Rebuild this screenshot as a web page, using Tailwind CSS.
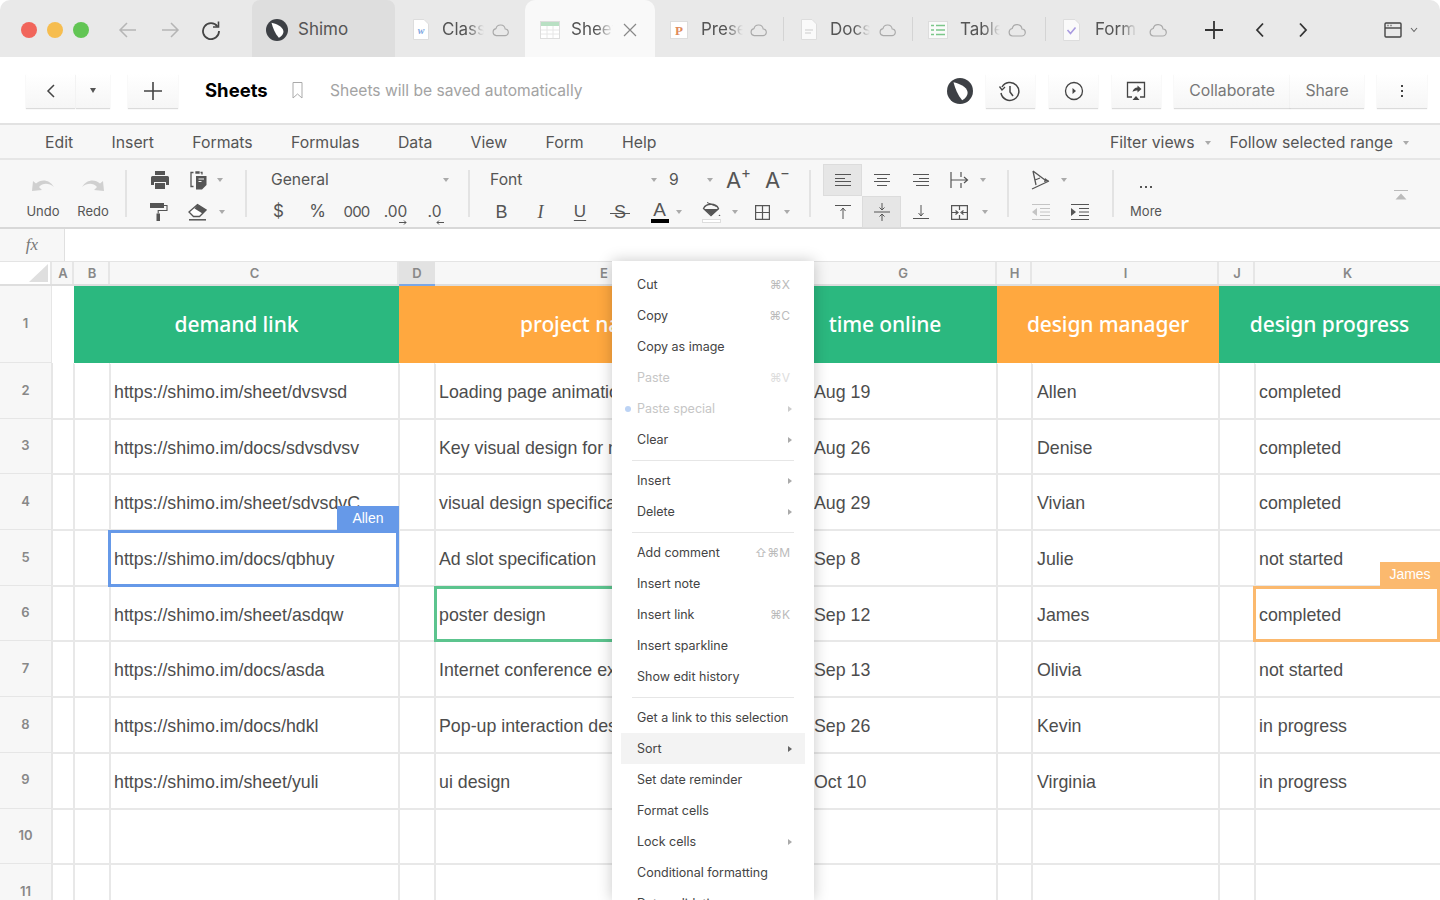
<!DOCTYPE html>
<html lang="en">
<head>
    <meta charset="UTF-8">
    <title>Shimo Sheets</title>
    <script src="https://cdn.jsdelivr.net/npm/@tailwindcss/browser@4"></script>
</head>
<body class="bg-white font-['Inter',sans-serif] text-[#555] overflow-hidden">
<div class="relative w-[1440px] h-[900px] overflow-hidden flex flex-col">

    <!-- Browser tabs -->
    <div class="h-[57px] shrink-0 bg-[#e9e9e9] rounded-t-[10px] flex items-center pt-[2px] pl-[21px] text-[17px] text-[#555] whitespace-nowrap">
        <div class="flex gap-[10px]">
            <div class="w-4 h-4 rounded-full bg-[#f1655b]"></div>
            <div class="w-4 h-4 rounded-full bg-[#f6bd4f]"></div>
            <div class="w-4 h-4 rounded-full bg-[#62c554]"></div>
        </div>
        <svg class="ml-[29px] w-5 h-5 text-[#b5b5b5]" viewBox="0 0 20 20" fill="none" stroke="currentColor" stroke-width="1.5"><path d="M18 10H2M9 3l-7 7 7 7"/></svg>
        <svg class="ml-[22px] w-5 h-5 text-[#b5b5b5]" viewBox="0 0 20 20" fill="none" stroke="currentColor" stroke-width="1.5"><path d="M2 10h16M11 3l7 7-7 7"/></svg>
        <svg class="ml-[21px] w-5 h-5 text-[#444]" viewBox="0 0 20 20" fill="none" stroke="currentColor" stroke-width="1.8"><path d="M16.5 6.5A8 8 0 1 0 18 11"/><path d="M17.5 1.5v5.5h-5.5" stroke-width="1.6"/></svg>

        <!-- Shimo -->
        <div class="ml-[31px] w-[143px] self-start -mt-[2px] h-[57px] pt-[2px] bg-[#dedede] rounded-t-[8px] flex items-center pl-[14px]">
            <svg class="w-[22px] h-[22px]" viewBox="0 0 24 24"><circle cx="12" cy="12" r="12" fill="#3d4045"/><path d="M6 4C11 5 18 8 19 13c.3 3-2 6-5 7.500C10 16 7.500 10 6 4z" fill="#fff"/></svg>
            <span class="ml-[10px]">Shimo</span>
        </div>

        <!-- Class -->
        <div class="w-[130px] self-start -mt-[2px] h-[57px] pt-[2px] flex items-center pl-[18px]">
            <svg class="w-4 h-[21px]" viewBox="0 0 16 21"><path d="M.5.5h10.500l4.500 4.500v15.500H.5z" fill="#fff" stroke="#ddd"/><text x="8" y="15" font-size="10" font-style="italic" font-weight="700" font-family="Liberation Serif" fill="#7ea6e0" text-anchor="middle">w</text></svg>
            <span class="ml-[13px] w-[42px] overflow-hidden [mask-image:linear-gradient(to_right,#000_60%,transparent)]">Class</span>
            <svg class="ml-[8px] w-[17px] h-[14px] text-[#aaa]" viewBox="0 0 18 14" fill="none" stroke="currentColor" stroke-width="1.200"><path d="M4.500 13h9a3.500 3.500 0 0 0 .5-7 5 5 0 0 0-9.800-.5A3.800 3.800 0 0 0 4.500 13z"/></svg>
        </div>

        <!-- Active sheet -->
        <div class="w-[130px] self-start -mt-[2px] h-[57px] pt-[2px] bg-[#f9f9f9] rounded-t-[10px] flex items-center pl-[15px]">
            <svg class="w-5 h-[18px]" viewBox="0 0 20 18"><rect x=".5" y=".5" width="19" height="17" fill="#fff" stroke="#ddd"/><rect x="1" y="1" width="18" height="4" fill="#b9e0c4"/><path d="M1 9h18M1 13h18M7 5v12M13 5v12" stroke="#e6e6e6"/></svg>
            <span class="ml-[11px] w-[42px] overflow-hidden [mask-image:linear-gradient(to_right,#000_60%,transparent)]">Sheet</span>
            <svg class="ml-[10px] w-[14px] h-[14px] text-[#888]" viewBox="0 0 14 14" fill="none" stroke="currentColor" stroke-width="1.200"><path d="M1 1l12 12M13 1L1 13"/></svg>
        </div>

        <!-- Presentation -->
        <div class="w-[129px] self-start -mt-[2px] h-[57px] pt-[2px] flex items-center pl-[15px] relative">
            <svg class="w-[18px] h-[18px]" viewBox="0 0 18 18"><rect x=".5" y=".5" width="17" height="17" fill="#fff" stroke="#ddd"/><text x="9" y="14" font-size="13" font-weight="700" font-family="Liberation Serif" fill="#e08a5a" text-anchor="middle">P</text></svg>
            <span class="ml-[13px] w-[42px] overflow-hidden [mask-image:linear-gradient(to_right,#000_60%,transparent)]">Prese</span>
            <svg class="ml-[7px] w-[17px] h-[14px] text-[#aaa]" viewBox="0 0 18 14" fill="none" stroke="currentColor" stroke-width="1.200"><path d="M4.500 13h9a3.500 3.500 0 0 0 .5-7 5 5 0 0 0-9.800-.5A3.800 3.800 0 0 0 4.500 13z"/></svg>
            <div class="absolute right-0 top-[17px] h-[24px] w-px bg-[#d4d4d4]"></div>
        </div>

        <!-- Docs -->
        <div class="w-[129px] self-start -mt-[2px] h-[57px] pt-[2px] flex items-center pl-[17px] relative">
            <svg class="w-4 h-[21px]" viewBox="0 0 16 21"><path d="M.5.5h10.500l4.500 4.500v15.500H.5z" fill="#fafafa" stroke="#ddd"/><path d="M4 11h8M4 14h6" stroke="#ccc"/></svg>
            <span class="ml-[13px] w-[40px] overflow-hidden [mask-image:linear-gradient(to_right,#000_60%,transparent)]">Docs</span>
            <svg class="ml-[9px] w-[17px] h-[14px] text-[#aaa]" viewBox="0 0 18 14" fill="none" stroke="currentColor" stroke-width="1.200"><path d="M4.500 13h9a3.500 3.500 0 0 0 .5-7 5 5 0 0 0-9.800-.5A3.800 3.800 0 0 0 4.500 13z"/></svg>
            <div class="absolute right-0 top-[17px] h-[24px] w-px bg-[#d4d4d4]"></div>
        </div>

        <!-- Table -->
        <div class="w-[133px] self-start -mt-[2px] h-[57px] pt-[2px] flex items-center pl-[15px] relative">
            <svg class="w-5 h-[18px]" viewBox="0 0 20 18"><rect x=".5" y=".5" width="19" height="17" fill="#fafafa" stroke="#ddd"/><path d="M3 4.500h3M8 4.500h9M3 9h3M8 9h9M3 13.500h3M8 13.500h9" stroke="#7cc78a" stroke-width="1.500"/></svg>
            <span class="ml-[12px] w-[40px] overflow-hidden [mask-image:linear-gradient(to_right,#000_60%,transparent)]">Table</span>
            <svg class="ml-[8px] w-[18px] h-[14px] text-[#aaa]" viewBox="0 0 18 14" fill="none" stroke="currentColor" stroke-width="1.200"><path d="M4.500 13h9a3.500 3.500 0 0 0 .5-7 5 5 0 0 0-9.800-.5A3.800 3.800 0 0 0 4.500 13z"/></svg>
            <div class="absolute right-0 top-[17px] h-[24px] w-px bg-[#d4d4d4]"></div>
        </div>

        <!-- Form -->
        <div class="self-start -mt-[2px] h-[57px] pt-[2px] flex items-center pl-[17px]">
            <svg class="w-[17px] h-[22px]" viewBox="0 0 17 22"><path d="M.5.500h11.500l4.500 4.500v16.500H.5z" fill="#fafafa" stroke="#ddd"/><path d="M4.500 11l3 3.500 5-6" fill="none" stroke="#a99be0" stroke-width="1.600"/></svg>
            <span class="ml-[15px] w-[42px] overflow-hidden [mask-image:linear-gradient(to_right,#000_60%,transparent)]">Form</span>
            <svg class="ml-[12px] w-[18px] h-[14px] text-[#aaa]" viewBox="0 0 18 14" fill="none" stroke="currentColor" stroke-width="1.200"><path d="M4.500 13h9a3.500 3.500 0 0 0 .5-7 5 5 0 0 0-9.800-.5A3.800 3.800 0 0 0 4.500 13z"/></svg>
        </div>

        <svg class="ml-[37px] w-5 h-5 text-[#333]" viewBox="0 0 20 20" fill="none" stroke="currentColor" stroke-width="1.800"><path d="M10 1v18M1 10h18"/></svg>
        <svg class="ml-[30px] w-3 h-4 text-[#333]" viewBox="0 0 12 16" fill="none" stroke="currentColor" stroke-width="1.800"><path d="M9 1.500L3 8l6 6.500"/></svg>
        <svg class="ml-[31px] w-3 h-4 text-[#333]" viewBox="0 0 12 16" fill="none" stroke="currentColor" stroke-width="1.800"><path d="M3 1.500L9 8l-6 6.500"/></svg>
        <svg class="ml-[75px] w-[18px] h-[16px] text-[#444]" viewBox="0 0 18 16" fill="none" stroke="currentColor" stroke-width="1.400"><rect x="1" y="1" width="16" height="14" rx="1"/><path d="M1 6h16" /><path d="M3.500 3.500h1M6.500 3.500h1"/></svg>
        <svg class="ml-[8px] w-2 h-[6px] text-[#666]" viewBox="0 0 8 6" fill="none" stroke="currentColor" stroke-width="1.100"><path d="M1 1l3 3.500L7 1"/></svg>
    </div>

    <!-- Document header -->
    <div class="h-[68px] shrink-0 bg-white flex items-center pt-px pl-[26px] border-b-2 border-[#e2e2e2]">
        <div class="w-[49px] h-[34px] bg-linear-to-b from-white to-[#f6f6f6] shadow-[0_1px_1px_rgba(0,0,0,0.14)] flex items-center justify-center">
            <svg class="w-[10px] h-[16px] text-[#444]" viewBox="0 0 10 16" fill="none" stroke="currentColor" stroke-width="1.500"><path d="M8 2L2 8l6 6"/></svg>
        </div>
        <div class="ml-px w-[34px] h-[34px] bg-linear-to-b from-white to-[#f6f6f6] shadow-[0_1px_1px_rgba(0,0,0,0.14)] flex items-center justify-center">
            <div class="border-x-[3.5px] border-t-[5px] border-x-transparent border-t-[#555]"></div>
        </div>
        <div class="ml-[18px] w-[50px] h-[34px] bg-linear-to-b from-white to-[#f6f6f6] shadow-[0_1px_1px_rgba(0,0,0,0.14)] flex items-center justify-center">
            <svg class="w-5 h-5 text-[#444]" viewBox="0 0 20 20" fill="none" stroke="currentColor" stroke-width="1.600"><path d="M10 1v18M1 10h18"/></svg>
        </div>
        <span class="ml-[27px] w-[63px] text-[18.5px] font-bold text-black">Sheets</span>
        <svg class="ml-[24px] w-[11px] h-[17px] text-[#aaa]" viewBox="0 0 11 17" fill="none" stroke="currentColor"><path d="M1 .500h9V16l-4.500-4L1 16z"/></svg>
        <span class="ml-[27px] text-[15.6px] text-[#a3a3a3]">Sheets will be saved automatically</span>

        <svg class="ml-auto w-[26px] h-[26px]" viewBox="0 0 24 24"><circle cx="12" cy="12" r="12" fill="#3d4045"/><path d="M6 4C11 5 18 8 19 13c.3 3-2 6-5 7.500C10 16 7.500 10 6 4z" fill="#fff"/></svg>
        <div class="ml-[13px] w-[49px] h-[34px] bg-linear-to-b from-white to-[#f6f6f6] shadow-[0_1px_1px_rgba(0,0,0,0.14)] flex items-center justify-center">
            <svg class="mr-[3px] w-[22px] h-[22px] text-[#444]" viewBox="0 0 22 22" fill="none" stroke="currentColor" stroke-width="1.500"><path d="M4 7a9 9 0 1 1-1 6"/><path d="M1.500 6.500L4 10l3-3" stroke-width="1.300"/><path d="M12 6v6l3 4"/></svg>
        </div>
        <div class="ml-[14px] w-[49px] h-[34px] bg-linear-to-b from-white to-[#f6f6f6] shadow-[0_1px_1px_rgba(0,0,0,0.14)] flex items-center justify-center">
            <svg class="w-[20px] h-[20px] text-[#444]" viewBox="0 0 20 20" fill="none" stroke="currentColor" stroke-width="1.300"><circle cx="10" cy="10" r="8.500"/><path d="M8.500 7l3.500 3-3.500 3z" fill="currentColor" stroke="none"/></svg>
        </div>
        <div class="ml-[14px] w-[49px] h-[34px] bg-linear-to-b from-white to-[#f6f6f6] shadow-[0_1px_1px_rgba(0,0,0,0.14)] flex items-center justify-center">
            <svg class="mr-[2px] w-[20px] h-[20px] text-[#444]" viewBox="0 0 20 20" fill="none" stroke="currentColor" stroke-width="1.300"><path d="M6 16H1.500V1.500h17V16H14"/><path d="M10 15l-3.500 4h7z" fill="currentColor" stroke="none"/><path d="M6.500 11c.5-3 2.500-4.500 5-4.500V4.500l4 3.500-4 3.500V9.500c-2 0-3.500.5-5 1.500z" fill="currentColor" stroke="none"/></svg>
        </div>
        <div class="ml-[13px] w-[116px] h-[34px] bg-linear-to-b from-white to-[#f6f6f6] shadow-[0_1px_1px_rgba(0,0,0,0.14)] flex items-center justify-center text-[15.8px] text-[#777]">Collaborate</div>
        <div class="w-[74px] h-[34px] bg-linear-to-b from-white to-[#f6f6f6] shadow-[0_1px_1px_rgba(0,0,0,0.14)] flex items-center justify-center text-[15.8px] text-[#777]">Share</div>
        <div class="ml-[13px] mr-[13px] w-[50px] h-[34px] bg-linear-to-b from-white to-[#f6f6f6] shadow-[0_1px_1px_rgba(0,0,0,0.14)] flex flex-col items-center justify-center gap-[3px]">
            <div class="w-[2px] h-[2px] bg-[#444]"></div><div class="w-[2px] h-[2px] bg-[#444]"></div><div class="w-[2px] h-[2px] bg-[#444]"></div>
        </div>
    </div>

    <!-- Menu bar -->
    <div class="h-[35px] shrink-0 bg-[#f7f7f7] border-b-2 border-[#e6e6e6] flex items-center pt-[3px] pl-[45px] gap-[38.3px] text-[15.8px] text-[#555]">
        <span>Edit</span><span>Insert</span><span>Formats</span><span>Formulas</span><span>Data</span><span>View</span><span>Form</span><span>Help</span>
        <div class="ml-auto mr-[31px] flex items-center">
            <span>Filter views</span>
            <div class="ml-[10px] border-x-[3.5px] border-t-[4px] border-x-transparent border-t-[#aaa]"></div>
            <span class="ml-[19px]">Follow selected range</span>
            <div class="ml-[10px] border-x-[3.5px] border-t-[4px] border-x-transparent border-t-[#aaa]"></div>
        </div>
    </div>

    <!-- Toolbar -->
    <div class="h-[69px] shrink-0 bg-[#f7f7f7] border-b-2 border-[#d8d8d8] flex items-start pt-[4px] text-[#555] relative">
        <div class="ml-[18px] flex">
            <div class="w-[50px] h-[64px] flex flex-col items-center justify-end text-[13px]">
                <svg class="w-[24px] h-[14px] mb-[10px] text-[#d0d0d0]" viewBox="0 0 24 14" fill="currentColor"><path d="M1 13L2 3l3 2.500C10 1 18 1 23 9c-5-4-11-4.500-15 0l3 3z"/></svg>
                <span class="mb-[7px]">Undo</span>
            </div>
            <div class="w-[50px] h-[64px] flex flex-col items-center justify-end text-[13px]">
                <svg class="w-[24px] h-[14px] mb-[10px] text-[#d0d0d0]" viewBox="0 0 24 14" fill="currentColor"><path d="M23 13L22 3l-3 2.500C14 1 6 1 1 9c5-4 11-4.500 15 0l-3 3z"/></svg>
                <span class="mb-[7px]">Redo</span>
            </div>
        </div>
        <div class="ml-[7px] mt-[6px] w-[2px] h-[47px] bg-[#e3e3e3]"></div>

        <!-- print / paste / roller / eraser -->
        <div class="ml-[13px] flex flex-col w-[85px]">
            <div class="h-[32px] flex items-center">
                <div class="w-[39px] flex justify-center"><svg class="w-[18px] h-[18px] text-[#555]" viewBox="0 0 18 18" fill="currentColor"><path d="M4 0h10v4H4zM1.500 5h15A1.500 1.500 0 0 1 18 6.500V14h-3v-3H3v3H0V6.500A1.500 1.500 0 0 1 1.500 5zM4 12h10v6H4z"/></svg></div>
                <div class="w-[39px] flex justify-center"><svg class="w-[17px] h-[19px] text-[#555]" viewBox="0 0 17 19"><path d="M3.500 1.500H1v14h2.500M6 .8h3v1.400H6zM10.500 1.500H12v2" fill="none" stroke="currentColor" stroke-width="1.300"/><path d="M6 5h10.500v9L12 18.500H6z" fill="currentColor"/><path d="M8.500 8h5.500M8.500 10.500h3" stroke="#f7f7f7"/></svg></div>
                <div class="ml-[-1px] border-x-[3.5px] border-t-[4px] border-x-transparent border-t-[#aaa]"></div>
            </div>
            <div class="h-[32px] flex items-center">
                <div class="w-[39px] flex justify-center"><svg class="w-[18px] h-[18px] text-[#555]" viewBox="0 0 18 18"><path d="M0 0h14v5H0zM6.500 10.500h3.500V18H6.500z" fill="currentColor"/><path d="M14 2.500h3V7.500H8.200v3" fill="none" stroke="currentColor" stroke-width="1.100"/></svg></div>
                <div class="w-[39px] flex justify-center"><svg class="w-[19px] h-[18px] text-[#555]" viewBox="0 0 19 18"><path d="M1 9L9.500 1.500 18 7l-6.500 6.500H5.500z" fill="#fff" stroke="currentColor" stroke-width="1.300"/><path d="M6.500 5.500L9.500 1.500 18 7l-3.500 3.500z" fill="currentColor"/><path d="M1 16.800h17" stroke="currentColor" stroke-width="1.500"/></svg></div>
                <div class="ml-[2px] border-x-[3.5px] border-t-[4px] border-x-transparent border-t-[#aaa]"></div>
            </div>
        </div>
        <div class="ml-[20px] mt-[6px] w-[2px] h-[47px] bg-[#e3e3e3]"></div>

        <!-- number format -->
        <div class="ml-[12px] flex flex-col w-[197px]">
            <div class="h-[32px] flex items-center pl-[12px] text-[15.7px]">
                <span>General</span>
                <div class="ml-[114px] border-x-[3.5px] border-t-[4px] border-x-transparent border-t-[#aaa]"></div>
            </div>
            <div class="h-[32px] flex items-center text-[17px]">
                <div class="w-[39px] text-center">$</div>
                <div class="w-[39px] text-center">%</div>
                <div class="w-[39px] text-center text-[15px] tracking-[-0.8px]">000</div>
                <div class="w-[39px] flex flex-col items-center leading-[16px] text-[15.5px] relative">.00<svg class="absolute top-[16px] right-[8px] w-2 h-[5px]" viewBox="0 0 8 5" fill="none" stroke="currentColor"><path d="M0 2.500h7M5 .500l2 2-2 2"/></svg></div>
                <div class="w-[39px] flex flex-col items-center leading-[16px] text-[15.5px] relative">.0<svg class="absolute top-[16px] right-[10px] w-2 h-[5px]" viewBox="0 0 8 5" fill="none" stroke="currentColor"><path d="M8 2.500H1M3 .500l-2 2 2 2"/></svg></div>
            </div>
        </div>
        <div class="ml-[12px] mt-[6px] w-[2px] h-[47px] bg-[#e3e3e3]"></div>

        <!-- font -->
        <div class="ml-[12px] flex flex-col w-[328px]">
            <div class="h-[32px] flex items-center pl-[8px] text-[15.7px]">
                <span class="w-[161px]">Font</span>
                <div class="border-x-[3.5px] border-t-[4px] border-x-transparent border-t-[#aaa]"></div>
                <span class="ml-[12px] w-[38px]">9</span>
                <div class="border-x-[3.5px] border-t-[4px] border-x-transparent border-t-[#aaa]"></div>
                <span class="ml-[13px] text-[22px] leading-none relative w-[39px]">A<span class="absolute left-[15px] top-[-4px] text-[15px]">+</span></span>
                <span class="text-[22px] leading-none relative">A<span class="absolute left-[15px] top-[-4px] text-[15px]">−</span></span>
            </div>
            <div class="h-[32px] flex items-center text-[18px]">
                <div class="w-[39px] text-center font-['Liberation_Sans']">B</div>
                <div class="w-[39px] text-center italic font-['Liberation_Serif']">I</div>
                <div class="w-[40px] text-center underline underline-offset-[3px] font-['Liberation_Sans'] text-[17px]">U</div>
                <div class="w-[40px] flex justify-center relative font-['Liberation_Sans'] text-[18px]">S<div class="absolute left-[10px] right-[10px] top-[14px] h-px bg-[#555]"></div></div>
                <div class="w-[39px] flex flex-col items-center leading-[18px]"><span class="text-[19px] font-['Liberation_Sans']">A</span><div class="w-[18px] h-[4px] bg-black"></div></div>
                <div class="ml-[-3px] border-x-[3.5px] border-t-[4px] border-x-transparent border-t-[#aaa]"></div>
                <div class="ml-[17px] w-[24px] flex justify-center"><svg class="w-[19px] h-[22px] text-[#555]" viewBox="0 0 19 22"><path d="M1.500 7.500L9 14.500 16.500 7.500A8 6.500 0 0 0 1.500 7.500z" fill="none" stroke="currentColor" stroke-width="1.300"/><path d="M2 8h15l-7.500 6.500z" fill="currentColor"/><path d="M5 1.500L14.500 5.500" stroke="currentColor"/><path d="M17.500 13.500l1 1.500h-2z" fill="currentColor"/><rect x=".5" y="18.500" width="18" height="3" fill="#fff" stroke="#ddd"/></svg></div>
                <div class="ml-[9px] border-x-[3.5px] border-t-[4px] border-x-transparent border-t-[#aaa]"></div>
                <div class="ml-[14px] w-[20px] flex justify-center"><svg class="w-[15px] h-[15px] text-[#555]" viewBox="0 0 15 15" fill="none" stroke="currentColor" stroke-width="1.200"><path d="M.6.600h13.800v13.800H.6zM7.500 1v13M1 7.500h13"/></svg></div>
                <div class="ml-[12px] border-x-[3.5px] border-t-[4px] border-x-transparent border-t-[#aaa]"></div>
            </div>
        </div>
        <div class="ml-[-1px] mt-[6px] w-[2px] h-[47px] bg-[#e3e3e3]"></div>

        <!-- alignment -->
        <div class="ml-[12px] flex flex-col w-[172px]">
            <div class="h-[32px] flex items-center">
                <div class="w-[39px] h-[32px] bg-[#e6e6e6] border border-[#dcdcdc] flex items-center justify-center"><svg class="w-4 h-3 text-[#555]" viewBox="0 0 16 12" stroke="currentColor"><path d="M0 .500h16M0 4.500h10M0 7.500h16M0 11.500h16"/></svg></div>
                <div class="w-[39px] flex justify-center"><svg class="w-4 h-3 text-[#555]" viewBox="0 0 16 12" stroke="currentColor"><path d="M0 .500h16M3 4.500h10M0 7.500h16M3 11.500h10"/></svg></div>
                <div class="w-[39px] flex justify-center"><svg class="w-4 h-3 text-[#555]" viewBox="0 0 16 12" stroke="currentColor"><path d="M0 .500h16M6 4.500h10M0 7.500h16M3 11.500h13"/></svg></div>
                <div class="w-[39px] flex justify-center"><svg class="w-[19px] h-[16px] text-[#555]" viewBox="0 0 19 16" fill="none" stroke="currentColor" stroke-width="1.200"><path d="M1 0v16M11 0v5M11 11v5M1 8h16M14 5l3.500 3L14 11"/></svg></div>
                <div class="ml-[1px] border-x-[3.5px] border-t-[4px] border-x-transparent border-t-[#aaa]"></div>
            </div>
            <div class="h-[32px] flex items-center">
                <div class="w-[39px] flex justify-center"><svg class="w-4 h-[14px] text-[#555]" viewBox="0 0 16 14" fill="none" stroke="currentColor"><path d="M0 .500h16M8 14V3M5.500 6L8 3l2.500 3"/></svg></div>
                <div class="w-[39px] h-[32px] bg-[#e6e6e6] border border-[#dcdcdc] flex items-center justify-center"><svg class="w-4 h-[18px] text-[#555]" viewBox="0 0 16 18" fill="none" stroke="currentColor"><path d="M0 9h16M8 0v7M8 11v7M5.500 4.500L8 7l2.500-2.500M5.500 13.500L8 11l2.500 2.500"/></svg></div>
                <div class="w-[39px] flex justify-center"><svg class="w-4 h-[14px] text-[#555]" viewBox="0 0 16 14" fill="none" stroke="currentColor"><path d="M0 13.500h16M8 0v11M5.500 8L8 11l2.500-3"/></svg></div>
                <div class="w-[39px] flex justify-center"><svg class="w-[17px] h-[15px] text-[#555]" viewBox="0 0 17 15" fill="none" stroke="currentColor" stroke-width="1.200"><path d="M.6.600h15.800v13.800H.6zM8.500 1v4M8.500 10v4M1 7.500h5M4.500 5.500L7 7.500l-2.500 2M16 7.500h-5M12.500 5.500L10 7.500l2.500 2"/></svg></div>
                <div class="ml-[3px] border-x-[3.5px] border-t-[4px] border-x-transparent border-t-[#aaa]"></div>
            </div>
        </div>
        <div class="ml-[12px] mt-[6px] w-[2px] h-[47px] bg-[#e3e3e3]"></div>

        <!-- rotate / indent -->
        <div class="ml-[12px] flex flex-col w-[78px]">
            <div class="h-[32px] flex items-center">
                <div class="w-[39px] flex justify-center"><svg class="w-[19px] h-[20px] text-[#555]" viewBox="0 0 19 20" fill="none" stroke="currentColor" stroke-width="1.300"><path d="M1 19L18 11 M2 1l3 14M2 1l12 9M4 10l5-2"/><path d="M14 8l4 3-5 1z" fill="currentColor" stroke="none"/></svg></div>
                <div class="ml-[1px] border-x-[3.5px] border-t-[4px] border-x-transparent border-t-[#aaa]"></div>
            </div>
            <div class="h-[32px] flex items-center">
                <div class="w-[39px] flex justify-center"><svg class="w-[18px] h-[16px] text-[#c4c4c4]" viewBox="0 0 18 16" stroke="currentColor"><path d="M0 .500h18M8 4.500h10M8 8h10M8 11.500h10M0 15.500h18"/><path d="M5 4v8L0 8z" fill="currentColor" stroke="none"/></svg></div>
                <div class="w-[39px] flex justify-center"><svg class="w-[18px] h-[16px] text-[#555]" viewBox="0 0 18 16" stroke="currentColor"><path d="M0 .500h18M8 4.500h10M8 8h10M8 11.500h10M0 15.500h18"/><path d="M0 4v8l5-4z" fill="currentColor" stroke="none"/></svg></div>
            </div>
        </div>
        <div class="ml-[13px] mt-[6px] w-[2px] h-[47px] bg-[#e3e3e3]"></div>

        <div class="ml-[7px] w-[50px] h-[64px] flex flex-col items-center justify-end text-[13px]">
            <div class="flex gap-[3px] mb-[14px]"><div class="w-[2px] h-[2px] bg-[#555]"></div><div class="w-[2px] h-[2px] bg-[#555]"></div><div class="w-[2px] h-[2px] bg-[#555]"></div></div>
            <span class="mb-[7px]">More</span>
        </div>
        <svg class="absolute left-[1394px] top-[30px] w-[14px] h-[10px] text-[#bbb]" viewBox="0 0 14 10" fill="currentColor"><path d="M0 0h14v1H0zM7 3.500L12.500 9.500h-11z"/></svg>
    </div>

    <!-- Formula bar -->
    <div class="h-[33px] shrink-0 flex bg-white border-b border-[#e4e4e4]">
        <div class="w-[65px] bg-[#f7f7f7] border-r border-[#e0e0e0] flex items-center justify-center font-['Liberation_Serif'] italic text-[17px] text-[#777]">fx</div>
    </div>

    <!-- Sheet -->
    <div id="sheet" class="flex-1 overflow-hidden">
        <div class="h-[24px] grid grid-cols-[52px_22px_36px_289px_36px_338px_36px_188px_35px_187px_36px_185px] text-[13px] font-semibold text-[#888] border-b-2 border-[#dedede]">
            <div class="bg-white border-r-2 border-[#e6e6e6] flex justify-end items-end pr-[2px] pb-[2px]">
                <div class="w-0 h-0 border-l-[19px] border-b-[18px] border-l-transparent border-b-[#dfdfdf]"></div>
            </div>
            <div class="bg-[#f7f7f7] border-r-2 border-[#e6e6e6] pl-[2px] pt-px flex items-center justify-center">A</div>
            <div class="bg-[#f7f7f7] border-r-2 border-[#e6e6e6] pl-[2px] pt-px flex items-center justify-center">B</div>
            <div class="bg-[#f7f7f7] border-r-2 border-[#e6e6e6] pl-[2px] pt-px flex items-center justify-center">C</div>
            <div class="bg-[#e2e2e2] border-b-2 -mb-[2px] border-[#7ba7e6] pt-px flex items-center justify-center">D</div>
            <div class="bg-[#f7f7f7] border-r-2 border-[#e6e6e6] pl-[2px] pt-px flex items-center justify-center">E</div>
            <div class="bg-[#f7f7f7] border-r-2 border-[#e6e6e6] pl-[2px] pt-px flex items-center justify-center">F</div>
            <div class="bg-[#f7f7f7] border-r-2 border-[#e6e6e6] pl-[2px] pt-px flex items-center justify-center">G</div>
            <div class="bg-[#f7f7f7] border-r-2 border-[#e6e6e6] pl-[2px] pt-px flex items-center justify-center">H</div>
            <div class="bg-[#f7f7f7] border-r-2 border-[#e6e6e6] pl-[2px] pt-px flex items-center justify-center">I</div>
            <div class="bg-[#f7f7f7] border-r-2 border-[#e6e6e6] pl-[2px] pt-px flex items-center justify-center">J</div>
            <div class="bg-[#f7f7f7] pt-px flex items-center justify-center">K</div>
        </div>
        <div class="h-[77px] grid grid-cols-[52px_22px_325px_374px_224px_222px_221px] font-['Noto_Sans',sans-serif] text-[21px] tracking-[-0.1px] font-medium text-white">
            <div class="bg-[#f7f7f7] border-r border-b border-[#e6e6e6] shadow-[1px_1px_0_#e6e6e6] flex items-center justify-center font-['Inter'] text-[13px] font-semibold text-[#888]">1</div>
            <div class="bg-white"></div>
            <div class="bg-[#2bb87f] flex items-center justify-center">demand link</div>
            <div class="bg-[#ffa83f] flex items-center justify-center">project name</div>
            <div class="bg-[#2bb87f] flex items-center justify-center">time online</div>
            <div class="bg-[#ffa83f] flex items-center justify-center">design manager</div>
            <div class="bg-[#2bb87f] flex items-center justify-center">design progress</div>
        </div>
    </div>

    <!-- Context menu -->
    <div class="absolute z-20 left-[612px] top-[261px] bottom-0 w-[202px] bg-white shadow-[0_0_14px_rgba(0,0,0,0.22)] pt-[8px] text-[12.5px] leading-[20px] text-[#444] whitespace-nowrap overflow-hidden">
        <div class="h-[31px] flex items-center pl-[25px] pr-[24px] justify-between"><span>Cut</span><span class="text-[#bbb] text-[12px]">⌘X</span></div>
        <div class="h-[31px] flex items-center pl-[25px] pr-[24px] justify-between"><span>Copy</span><span class="text-[#bbb] text-[12px]">⌘C</span></div>
        <div class="h-[31px] flex items-center pl-[25px] pr-[24px] justify-between"><span>Copy as image</span></div>
        <div class="h-[31px] flex items-center pl-[25px] pr-[24px] justify-between text-[#c6c6c6]"><span>Paste</span><span class="text-[#ddd] text-[12px]">⌘V</span></div>
        <div class="relative h-[31px] flex items-center pl-[25px] pr-[22px] justify-between text-[#c6c6c6]">
            <div class="absolute left-[13px] top-[13px] w-[6px] h-[6px] rounded-full bg-[#bcd3f5]"></div>
            <span>Paste special</span><div class="border-y-[3.5px] border-l-[4px] border-y-transparent border-l-[#ccc]"></div>
        </div>
        <div class="h-[31px] flex items-center pl-[25px] pr-[22px] justify-between"><span>Clear</span><div class="border-y-[3.5px] border-l-[4px] border-y-transparent border-l-[#aaa]"></div></div>
        <div class="mx-[20px] my-[4.5px] h-px bg-[#e6e6e6]"></div>
        <div class="h-[31px] flex items-center pl-[25px] pr-[22px] justify-between"><span>Insert</span><div class="border-y-[3.5px] border-l-[4px] border-y-transparent border-l-[#aaa]"></div></div>
        <div class="h-[31px] flex items-center pl-[25px] pr-[22px] justify-between"><span>Delete</span><div class="border-y-[3.5px] border-l-[4px] border-y-transparent border-l-[#aaa]"></div></div>
        <div class="mx-[20px] my-[4.5px] h-px bg-[#e6e6e6]"></div>
        <div class="h-[31px] flex items-center pl-[25px] pr-[24px] justify-between"><span>Add comment</span><span class="text-[#bbb] text-[12px]">⇧⌘M</span></div>
        <div class="h-[31px] flex items-center pl-[25px] pr-[24px]">Insert note</div>
        <div class="h-[31px] flex items-center pl-[25px] pr-[24px] justify-between"><span>Insert link</span><span class="text-[#bbb] text-[12px]">⌘K</span></div>
        <div class="h-[31px] flex items-center pl-[25px] pr-[24px]">Insert sparkline</div>
        <div class="h-[31px] flex items-center pl-[25px] pr-[24px]">Show edit history</div>
        <div class="mx-[20px] my-[4.5px] h-px bg-[#e6e6e6]"></div>
        <div class="h-[31px] flex items-center pl-[25px] pr-[12px]">Get a link to this selection</div>
        <div class="mx-[9px] h-[31px] bg-[#f3f3f3] flex items-center pl-[16px] pr-[13px] justify-between"><span>Sort</span><div class="border-y-[3.5px] border-l-[4px] border-y-transparent border-l-[#666]"></div></div>
        <div class="h-[31px] flex items-center pl-[25px] pr-[24px]">Set date reminder</div>
        <div class="h-[31px] flex items-center pl-[25px] pr-[24px]">Format cells</div>
        <div class="h-[31px] flex items-center pl-[25px] pr-[22px] justify-between"><span>Lock cells</span><div class="border-y-[3.5px] border-l-[4px] border-y-transparent border-l-[#aaa]"></div></div>
        <div class="h-[31px] flex items-center pl-[25px] pr-[24px]">Conditional formatting</div>
        <div class="h-[31px] flex items-center pl-[25px] pr-[24px]">Data validation</div>
    </div>
</div>

<script>
    // columns: # A B C D E F G H I J K
    const rows = [
        ["https://shimo.im/sheet/dvsvsd", "Loading page animation", "Aug 19", "Allen", "completed"],
        ["https://shimo.im/docs/sdvsdvsv", "Key visual design for new", "Aug 26", "Denise", "completed"],
        ["https://shimo.im/sheet/sdvsdvC", "visual design specification", "Aug 29", "Vivian", "completed"],
        ["https://shimo.im/docs/qbhuy", "Ad slot specification", "Sep 8", "Julie", "not started"],
        ["https://shimo.im/sheet/asdqw", "poster design", "Sep 12", "James", "completed"],
        ["https://shimo.im/docs/asda", "Internet conference exhibition", "Sep 13", "Olivia", "not started"],
        ["https://shimo.im/docs/hdkl", "Pop-up interaction design", "Sep 26", "Kevin", "in progress"],
        ["https://shimo.im/sheet/yuli", "ui design", "Oct 10", "Virginia", "in progress"],
        ["", "", "", "", ""],
        ["", "", "", "", ""],
    ];
    const cell = "border-r border-b border-[#e8e8e8] shadow-[1px_1px_0_#e8e8e8] flex items-center pl-[4px] pt-[4px] whitespace-nowrap overflow-hidden";
    const sheet = document.getElementById("sheet");
    rows.forEach((r, i) => {
        const n = i + 2;
        let blue = "", green = "", orange = "";
        if (n === 5) blue = `<div class="absolute -left-[2px] top-0 -right-[1px] -bottom-[2px] border-[3px] border-[#6699e8] z-10"><div class="absolute right-[-3px] top-[-27px] w-[62px] h-[24px] bg-[#6699e8] text-white text-[14px] flex items-center justify-center">Allen</div></div>`;
        if (n === 6) green = `<div class="absolute -left-[1px] top-0 -right-[1px] -bottom-[2px] border-[3px] border-[#5cc48e] z-10"></div>`;
        if (n === 6) orange = `<div class="absolute -left-[2px] top-0 right-0 -bottom-[2px] border-[3px] border-[#fbb96e] z-10"><div class="absolute right-[-3px] top-[-27px] w-[60px] h-[24px] pt-[2px] bg-[#fbb96e] text-white text-[14px] flex items-center justify-center">James</div></div>`;
        sheet.insertAdjacentHTML("beforeend", `
        <div class="h-[55.7px] grid grid-cols-[52px_22px_36px_289px_36px_338px_36px_188px_35px_187px_36px_185px] font-['Liberation_Sans',sans-serif] text-[17.8px] text-[#4d4d4d]">
            <div class="bg-[#f7f7f7] border-r border-b border-[#e6e6e6] shadow-[1px_1px_0_#e6e6e6] flex items-center justify-center font-['Inter'] text-[13px] font-semibold text-[#888]">${n}</div>
            <div class="${cell}"></div><div class="${cell}"></div>
            <div class="${cell} !overflow-visible relative">${r[0]}${blue}</div>
            <div class="${cell}"></div>
            <div class="${cell} !overflow-visible relative">${r[1]}${green}</div>
            <div class="${cell}"></div>
            <div class="${cell} !pl-[5px]">${r[2]}</div>
            <div class="${cell}"></div>
            <div class="${cell} !pl-[5px]">${r[3]}</div>
            <div class="${cell}"></div>
            <div class="${cell} !border-r-0 !overflow-visible relative">${r[4]}${orange}</div>
        </div>`);
    });
</script>
</body>
</html>
